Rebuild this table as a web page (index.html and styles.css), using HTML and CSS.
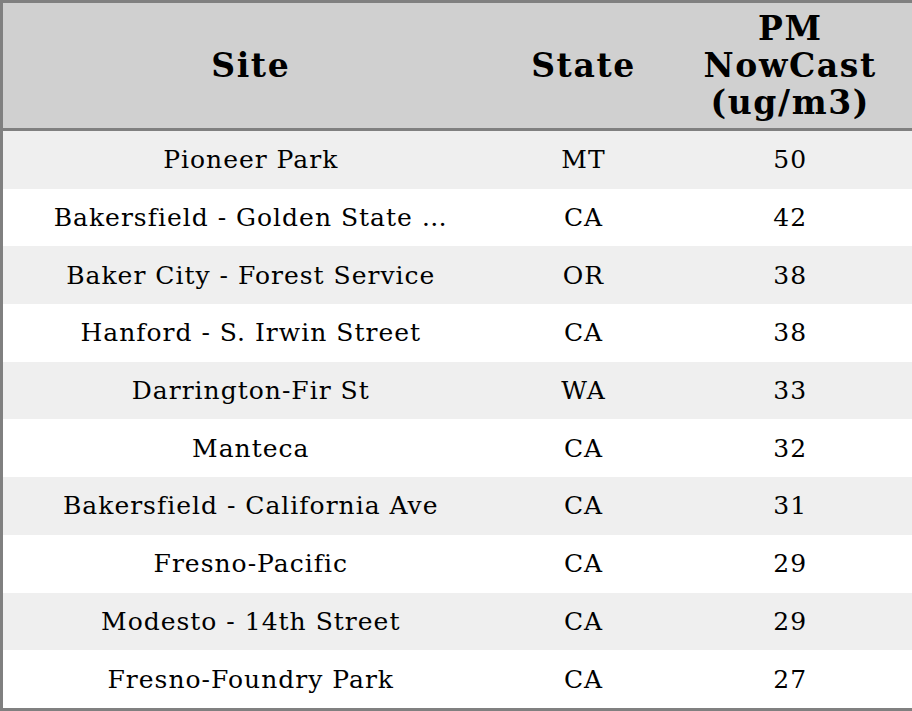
FILE: index.html
```html
<!DOCTYPE html>
<html>
<head>
<meta charset="utf-8">
<link rel="stylesheet" href="styles.css">
</head>
<body>
<table class="grid">
  <colgroup>
    <col class="c-site">
    <col class="c-state">
    <col class="c-pm">
  </colgroup>
  <thead>
    <tr><th>Site</th><th>State</th><th>PM NowCast (ug/m3)</th></tr>
  </thead>
  <tbody>
    <tr><td>Pioneer Park</td><td>MT</td><td>50</td></tr>
    <tr><td>Bakersfield - Golden State …</td><td>CA</td><td>42</td></tr>
    <tr><td>Baker City - Forest Service</td><td>OR</td><td>38</td></tr>
    <tr><td>Hanford - S. Irwin Street</td><td>CA</td><td>38</td></tr>
    <tr><td>Darrington-Fir St</td><td>WA</td><td>33</td></tr>
    <tr><td>Manteca</td><td>CA</td><td>32</td></tr>
    <tr><td>Bakersfield - California Ave</td><td>CA</td><td>31</td></tr>
    <tr><td>Fresno-Pacific</td><td>CA</td><td>29</td></tr>
    <tr><td>Modesto - 14th Street</td><td>CA</td><td>29</td></tr>
    <tr><td>Fresno-Foundry Park</td><td>CA</td><td>27</td></tr>
  </tbody>
</table>
</body>
</html>
```

FILE: styles.css
```css
html, body {
  margin: 0;
  padding: 0;
  background: #ffffff;
}

.grid {
  width: 912px;
  border-collapse: collapse;
  table-layout: fixed;
  border: 3px solid #808080;
  font-family: "DejaVu Serif", serif;
  color: #000000;
}

.c-site { width: 497px; }
.c-state { width: 170px; }
.c-pm { width: 245px; }

.grid th {
  background: #d0d0d0;
  font-size: 33px;
  font-weight: bold;
  letter-spacing: 1.6px;
  line-height: 37px;
  height: 125px;
  padding: 0 24px;
  text-align: center;
  vertical-align: middle;
  border-bottom: 3px solid #808080;
}

.grid td {
  font-size: 25px;
  letter-spacing: 1px;
  height: 57.7px;
  padding: 0;
  text-align: center;
  vertical-align: middle;
  white-space: nowrap;
  overflow: hidden;
}

.grid tbody tr:nth-child(odd) td {
  background: #efefef;
}
```
